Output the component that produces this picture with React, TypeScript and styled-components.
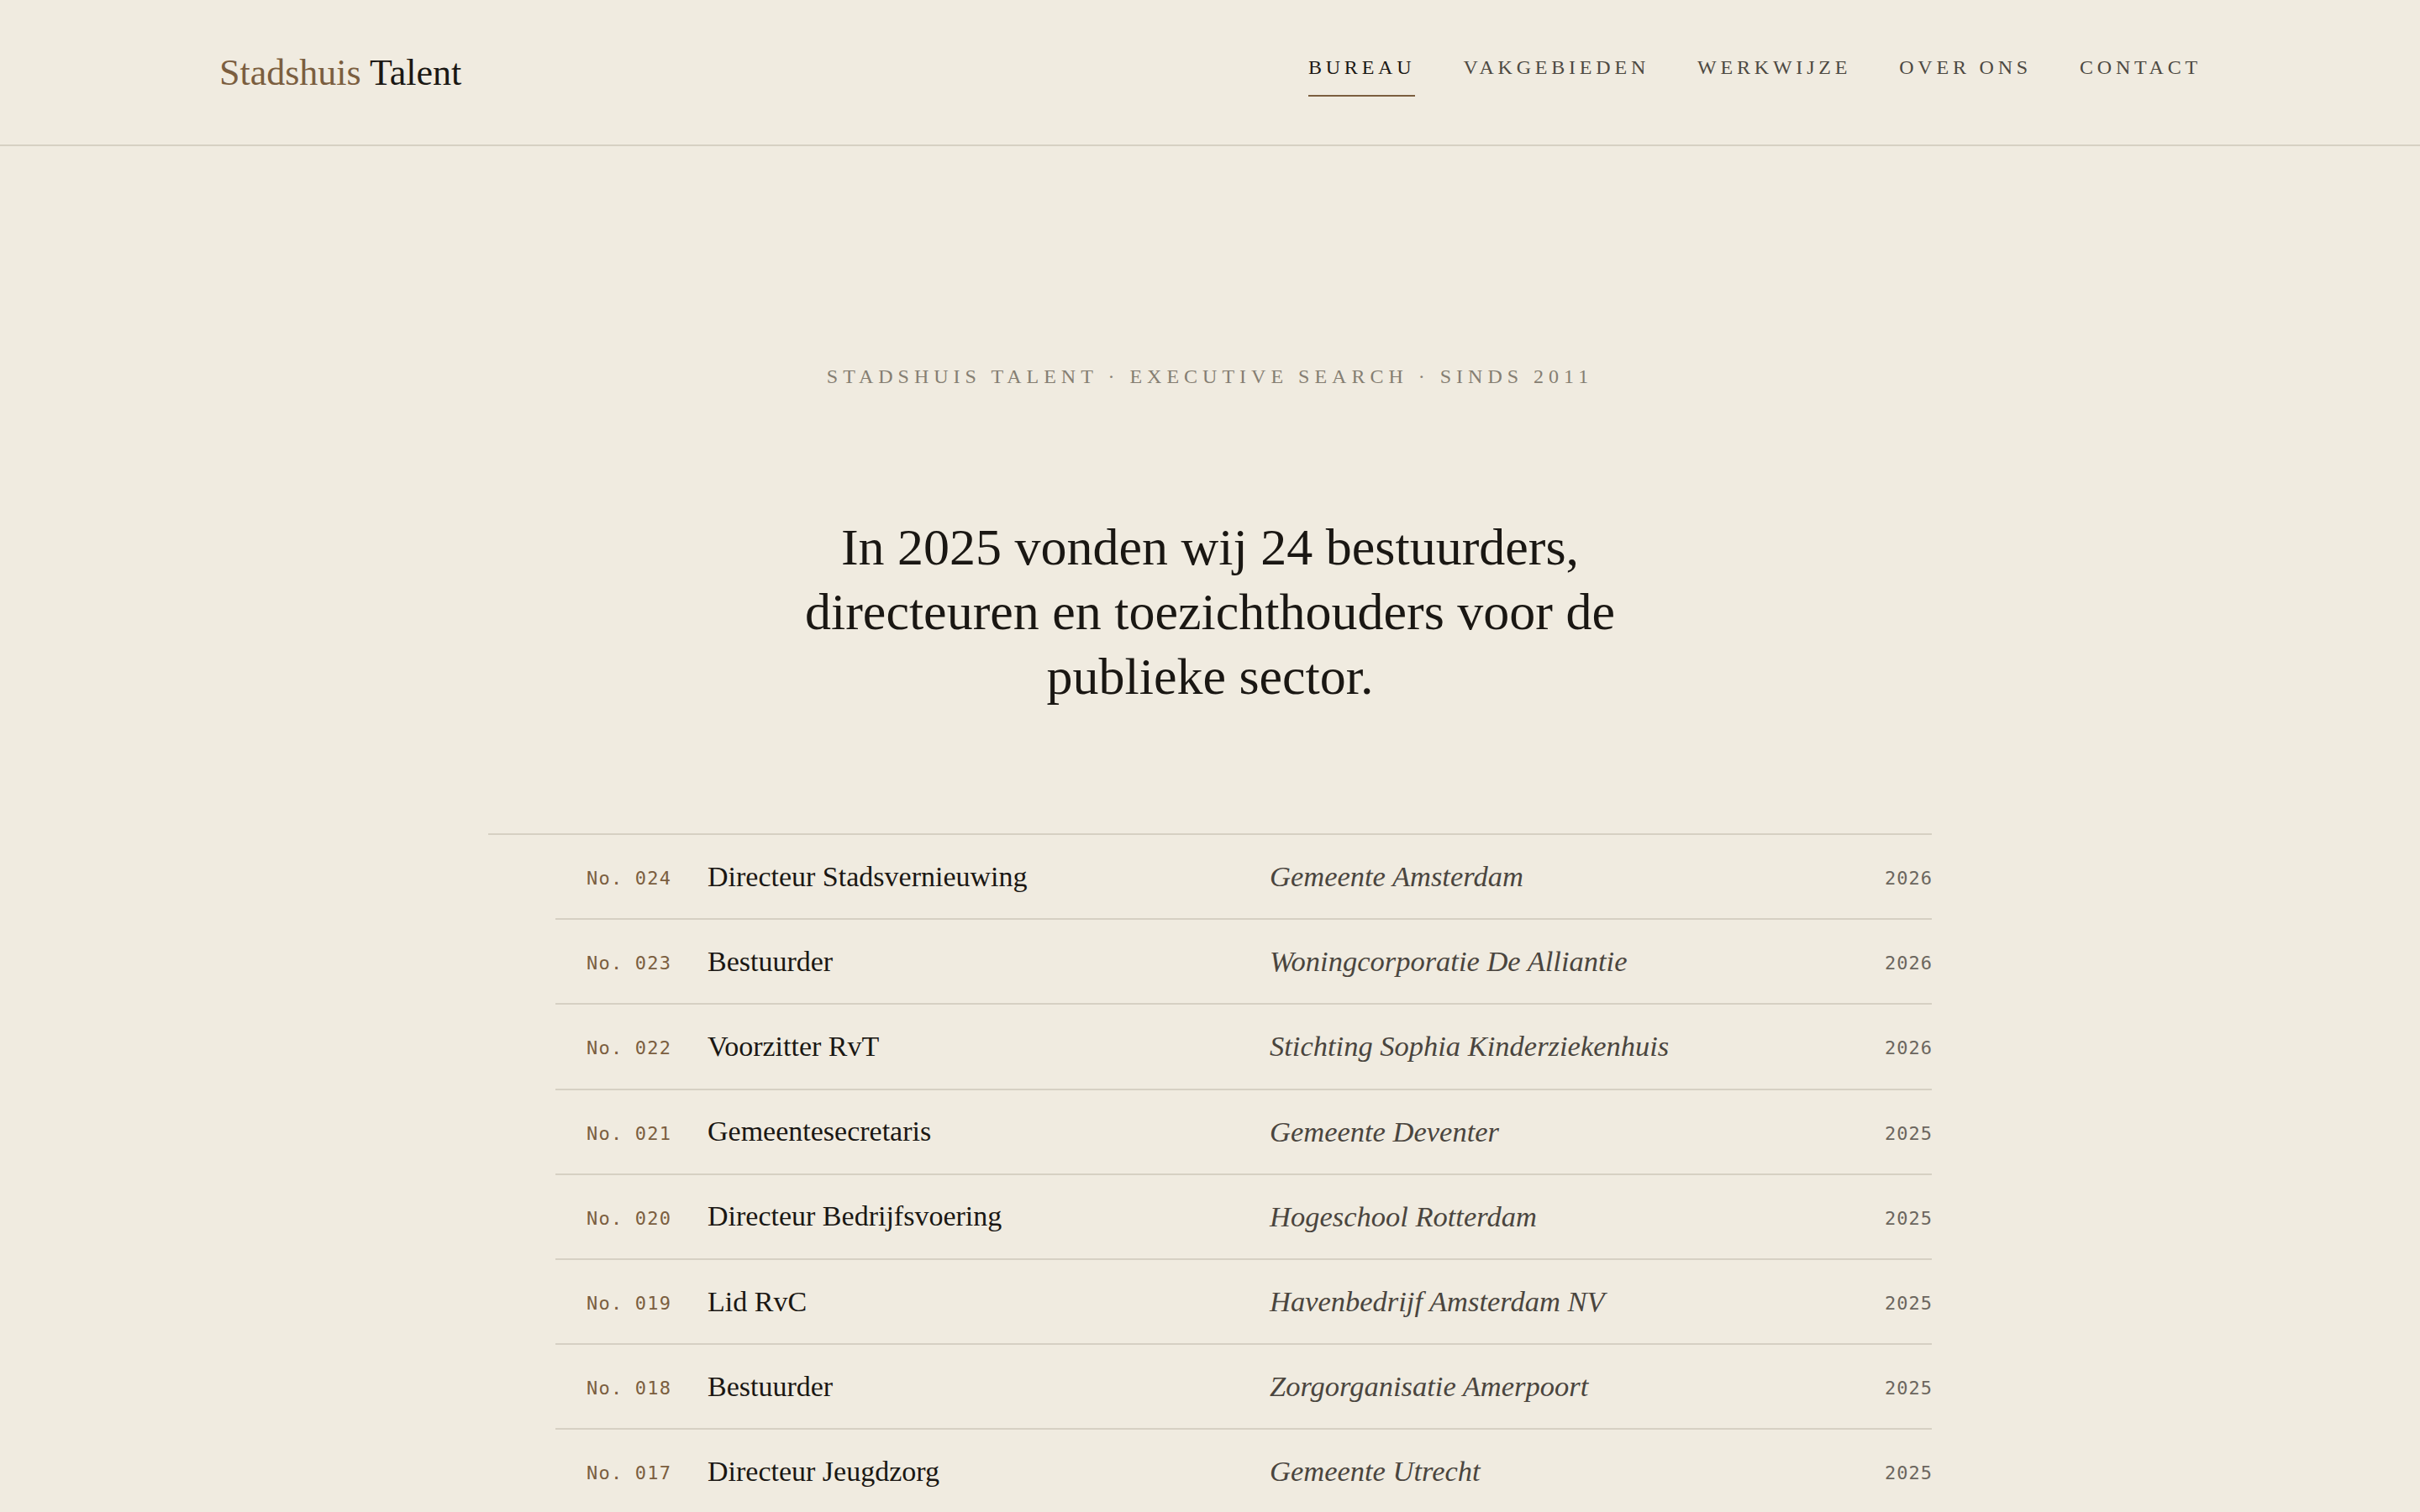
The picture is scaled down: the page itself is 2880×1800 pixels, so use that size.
import styled, { createGlobalStyle } from "styled-components";

const GlobalStyle = createGlobalStyle`
  * {
    box-sizing: border-box;
    margin: 0;
    padding: 0;
  }

  html,
  body {
    background: #f0ebe0;
    color: #1a1713;
    font-family: "Liberation Serif", "Times New Roman", serif;
  }
`;

const Page = styled.div`
  min-height: 100vh;
  background: #f0ebe0;
`;

const Header = styled.header`
  height: 174px;
  padding: 0 260px 0 261px;
  display: flex;
  align-items: center;
  justify-content: space-between;
  border-bottom: 2px solid #d6d0c3;
`;

const Logo = styled.a`
  font-size: 44px;
  color: #1a1713;
  text-decoration: none;

  span {
    color: #7b5e3f;
  }
`;

const Nav = styled.nav`
  display: flex;
  gap: 57px;
  margin-top: 2px;
`;

const NavLink = styled.a<{ $active?: boolean }>`
  display: block;
  padding: 9px 0 21px;
  font-size: 24px;
  line-height: 24px;
  letter-spacing: 4.8px;
  text-transform: uppercase;
  text-decoration: none;
  color: ${(p) => (p.$active ? "#1a1713" : "#4d4942")};
  border-bottom: 2px solid ${(p) => (p.$active ? "#7b5e3f" : "transparent")};
`;

const Main = styled.main`
  padding-top: 262px;
  display: flex;
  flex-direction: column;
  align-items: center;
`;

const Eyebrow = styled.p`
  font-size: 24px;
  line-height: 24px;
  letter-spacing: 6px;
  text-transform: uppercase;
  color: #857e72;
`;

const Headline = styled.h1`
  margin-top: 153px;
  max-width: 1080px;
  font-size: 62px;
  line-height: 77px;
  font-weight: 400;
  text-align: center;
  color: #1a1713;
`;

const List = styled.ol`
  list-style: none;
  margin-top: 148px;
  width: 1718px;
  border-top: 2px solid #d6d0c3;
`;

const Row = styled.li`
  margin-left: 80px;
  height: 101.2px;
  padding-left: 37px;
  display: grid;
  grid-template-columns: 144px 669px 1fr auto;
  align-items: center;
  border-bottom: 2px solid #d6d0c3;
`;

const Num = styled.span`
  font-family: "DejaVu Sans Mono", "Liberation Mono", monospace;
  font-size: 22px;
  letter-spacing: 1.2px;
  color: #7b5e3f;
  padding-top: 4px;
`;

const Role = styled.span`
  font-size: 34px;
  color: #1a1713;
`;

const Org = styled.span`
  font-size: 34.5px;
  font-style: italic;
  color: #4a453e;
`;

const Year = styled.span`
  font-family: "DejaVu Sans Mono", "Liberation Mono", monospace;
  font-size: 22px;
  letter-spacing: 1px;
  margin-right: -1px;
  color: #6b665e;
  padding-top: 4px;
`;

const navItems = ["Bureau", "Vakgebieden", "Werkwijze", "Over ons", "Contact"];

const placements = [
  { no: "024", role: "Directeur Stadsvernieuwing", org: "Gemeente Amsterdam", year: 2026 },
  { no: "023", role: "Bestuurder", org: "Woningcorporatie De Alliantie", year: 2026 },
  { no: "022", role: "Voorzitter RvT", org: "Stichting Sophia Kinderziekenhuis", year: 2026 },
  { no: "021", role: "Gemeentesecretaris", org: "Gemeente Deventer", year: 2025 },
  { no: "020", role: "Directeur Bedrijfsvoering", org: "Hogeschool Rotterdam", year: 2025 },
  { no: "019", role: "Lid RvC", org: "Havenbedrijf Amsterdam NV", year: 2025 },
  { no: "018", role: "Bestuurder", org: "Zorgorganisatie Amerpoort", year: 2025 },
  { no: "017", role: "Directeur Jeugdzorg", org: "Gemeente Utrecht", year: 2025 },
];

export default function App() {
  return (
    <Page>
      <GlobalStyle />
      <Header>
        <Logo href="#">
          <span>Stadshuis</span> Talent
        </Logo>
        <Nav>
          {navItems.map((item, i) => (
            <NavLink key={item} href="#" $active={i === 0}>
              {item}
            </NavLink>
          ))}
        </Nav>
      </Header>
      <Main>
        <Eyebrow>Stadshuis Talent · Executive Search · Sinds 2011</Eyebrow>
        <Headline>
          In 2025 vonden wij 24 bestuurders, directeuren en toezichthouders voor de publieke sector.
        </Headline>
        <List>
          {placements.map((p) => (
            <Row key={p.no}>
              <Num>No. {p.no}</Num>
              <Role>{p.role}</Role>
              <Org>{p.org}</Org>
              <Year>{p.year}</Year>
            </Row>
          ))}
        </List>
      </Main>
    </Page>
  );
}
